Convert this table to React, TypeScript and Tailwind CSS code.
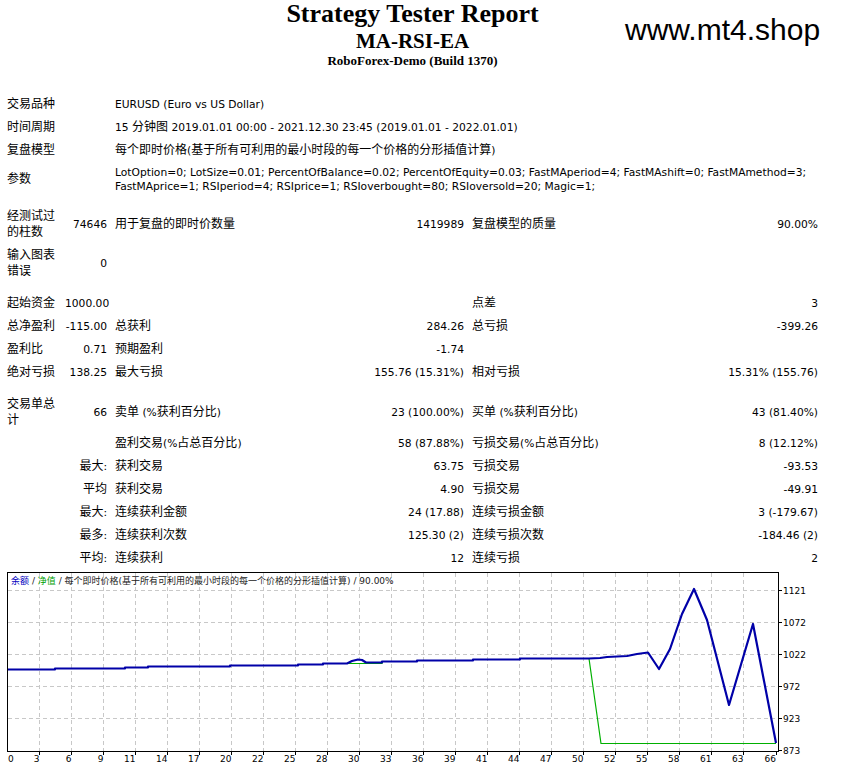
const font = "font-['DejaVu_Sans','Noto_Sans_CJK_SC',sans-serif]"

// CJK runs get a slightly larger size than the latin text, like the Tahoma/YaHei mix of the report
function T({ s }: { s: string }) {
  const parts = s.split(/([\u3000-\u9fff\uff00-\uffef]+)/)
  return (
    <>
      {parts.map((p, i) =>
        /[\u3000-\u9fff\uff00-\uffef]/.test(p) ? (
          <span key={i} className="text-[12px] leading-[0px]">
            {p}
          </span>
        ) : (
          p
        )
      )}
    </>
  )
}

type Row =
  | { kind: "spacer"; h: string }
  | { kind: "wide"; label: string; value: React.ReactNode; tight?: boolean }
  | { kind: "cells"; cells: (string | null)[]; lead?: string }

const rows: Row[] = [
  { kind: "wide", label: "交易品种", value: "EURUSD (Euro vs US Dollar)" },
  { kind: "wide", label: "时间周期", value: <T s="15 分钟图 2019.01.01 00:00 - 2021.12.30 23:45 (2019.01.01 - 2022.01.01)" /> },
  { kind: "wide", label: "复盘模型", value: <T s="每个即时价格(基于所有可利用的最小时段的每一个价格的分形插值计算)" /> },
  {
    kind: "wide",
    label: "参数",
    tight: true,
    value: (
      <>
        <span className="whitespace-nowrap">
          LotOption=0; LotSize=0.01; PercentOfBalance=0.02; PercentOfEquity=0.03; FastMAperiod=4; FastMAshift=0; FastMAmethod=3;
        </span>
        <br />
        <span className="whitespace-nowrap">
          FastMAprice=1; RSIperiod=4; RSIprice=1; RSIoverbought=80; RSIoversold=20; Magic=1;
        </span>
      </>
    ),
  },
  { kind: "spacer", h: "h-[8px]" },
  { kind: "cells", cells: ["经测试过的柱数", "74646", "用于复盘的即时价数量", "1419989", "复盘模型的质量", "90.00%"] },
  { kind: "cells", cells: ["输入图表错误", "0", null, null, null, null] },
  { kind: "spacer", h: "h-[9px]" },
  { kind: "cells", cells: ["起始资金", "1000.00", null, null, "点差", "3"] },
  { kind: "cells", cells: ["总净盈利", "-115.00", "总获利", "284.26", "总亏损", "-399.26"] },
  { kind: "cells", cells: ["盈利比", "0.71", "预期盈利", "-1.74", null, null] },
  { kind: "cells", cells: ["绝对亏损", "138.25", "最大亏损", "155.76 (15.31%)", "相对亏损", "15.31% (155.76)"] },
  { kind: "spacer", h: "h-[9px]" },
  { kind: "cells", cells: ["交易单总计", "66", "卖单 (%获利百分比)", "23 (100.00%)", "买单 (%获利百分比)", "43 (81.40%)"] },
  { kind: "cells", lead: "", cells: ["盈利交易(%占总百分比)", "58 (87.88%)", "亏损交易(%占总百分比)", "8 (12.12%)"] },
  { kind: "cells", lead: "最大:", cells: ["获利交易", "63.75", "亏损交易", "-93.53"] },
  { kind: "cells", lead: "平均", cells: ["获利交易", "4.90", "亏损交易", "-49.91"] },
  { kind: "cells", lead: "最大:", cells: ["连续获利金额", "24 (17.88)", "连续亏损金额", "3 (-179.67)"] },
  { kind: "cells", lead: "最多:", cells: ["连续获利次数", "125.30 (2)", "连续亏损次数", "-184.46 (2)"] },
  { kind: "cells", lead: "平均:", cells: ["连续获利", "12", "连续亏损", "2"] },
]

const cell = "px-[4px] py-[3.5px] align-middle"

function ReportTable() {
  return (
    <table className="ml-[3px] w-[819px] table-fixed border-collapse text-[10.7px] leading-[16px] text-black">
      <colgroup>
        <col className="w-[58px]" />
        <col className="w-[50px]" />
        <col className="w-[189px]" />
        <col className="w-[168px]" />
        <col className="w-[182px]" />
        <col className="w-[172px]" />
      </colgroup>
      <tbody>
        {rows.map((row, i) => {
          if (row.kind === "spacer") {
            return (
              <tr key={i} className={row.h}>
                <td colSpan={6} className="p-0" />
              </tr>
            )
          }
          if (row.kind === "wide") {
            return (
              <tr key={i}>
                <td colSpan={2} className={cell}>
                  <T s={row.label} />
                </td>
                <td colSpan={4} className={`${cell} ${row.tight ? "leading-[14px]" : ""}`}>
                  {row.value}
                </td>
              </tr>
            )
          }
          if (row.lead !== undefined) {
            const [a, b, c, d] = row.cells
            return (
              <tr key={i}>
                <td colSpan={2} className={`${cell} text-right`}>
                  <T s={row.lead} />
                </td>
                <td className={cell}>{a && <T s={a} />}</td>
                <td className={`${cell} text-right`}>{b}</td>
                <td className={cell}>{c && <T s={c} />}</td>
                <td className={`${cell} text-right`}>{d}</td>
              </tr>
            )
          }
          return (
            <tr key={i}>
              {row.cells.map((c, j) => (
                <td key={j} className={`${cell} ${j % 2 === 1 ? "text-right" : ""}`}>
                  {c && <T s={c} />}
                </td>
              ))}
            </tr>
          )
        })}
      </tbody>
    </table>
  )
}

const blue = [
  [8, 669.5], [55, 669.5], [55, 668.5], [125, 668.5], [125, 667.5], [148, 667.5], [148, 666.5],
  [230, 666.5], [230, 665.5], [298, 665.5], [298, 664.5], [323, 664.5], [323, 663.5], [347, 663.5],
  [352, 661], [358, 659.5], [362, 660], [366, 662.5], [382, 662.5], [382, 661.5], [417, 661.5],
  [417, 660.5], [473, 660.5], [473, 659.5], [520, 659.5], [520, 658.5], [589, 658.5], [600, 658],
  [607, 657], [627, 656], [637, 654], [648, 652.5], [659, 669], [670, 649], [682, 614], [694, 589],
  [707, 620], [729, 705], [753, 624], [776, 743],
]

const green = [
  [8, 669.5], [55, 669.5], [55, 668.5], [125, 668.5], [125, 667.5], [148, 667.5], [148, 666.5],
  [230, 666.5], [230, 665.5], [298, 665.5], [298, 664.5], [323, 664.5], [323, 663.5], [382, 663.5],
  [382, 661.5], [417, 661.5], [417, 660.5], [473, 660.5], [473, 659.5], [520, 659.5], [520, 658.5],
  [589, 658.5], [601, 743.5], [776, 743.5],
]

const xLabels = ["3", "6", "9", "11", "14", "17", "20", "22", "25", "28", "30", "33", "36", "39", "41", "44", "47", "50", "52", "55", "58", "61", "63"]
const yLabels = ["1121", "1072", "1022", "972", "923", "873"]
const svgFont = "'DejaVu Sans','Noto Sans CJK SC',sans-serif"

function EquityChart() {
  const pts = (p: number[][]) => p.map(([x, y]) => `${x},${y}`).join(" ")
  return (
    <svg width={842} height={195} viewBox="0 571 842 195" className="block">
      <rect x={7.5} y={572.5} width={771} height={179} fill="#fff" stroke="#000" />
      {[590.5, 622.5, 654.5, 686.5, 718.5].map((y) => (
        <line key={y} x1={8} x2={778} y1={y} y2={y} stroke="#c8c8c8" strokeDasharray="4 3" />
      ))}
      {xLabels.map((_, k) => {
        const x = 39.5 + 32 * k
        return <line key={k} x1={x} x2={x} y1={573} y2={751} stroke="#c8c8c8" strokeDasharray="4 3" />
      })}
      <text x={11} y={584} fontSize={9} fontFamily={svgFont} fill="#222">
        <tspan fill="#0000c0">余额</tspan>
        <tspan> / </tspan>
        <tspan fill="#00a000">净值</tspan>
        <tspan> / 每个即时价格(基于所有可利用的最小时段的每一个价格的分形插值计算) / 90.00%</tspan>
      </text>
      <polyline points={pts(green)} fill="none" stroke="#00b000" strokeWidth={1.2} />
      <polyline points={pts(blue)} fill="none" stroke="#0000a8" strokeWidth={2.2} strokeLinejoin="round" />
      {yLabels.map((l, i) => {
        const y = 590.5 + 32 * i
        return (
          <g key={l}>
            <line x1={778} x2={782} y1={y} y2={y} stroke="#000" />
            <text x={783} y={y + 3.5} fontSize={9} fontFamily={svgFont} fill="#000">
              {l}
            </text>
          </g>
        )
      })}
      {xLabels.map((l, k) => {
        const x = 39.5 + 32 * k
        return (
          <g key={l}>
            <line x1={x} x2={x} y1={751} y2={755} stroke="#000" />
            <text x={x} y={762} fontSize={9} fontFamily={svgFont} textAnchor="end" fill="#000">
              {l}
            </text>
          </g>
        )
      })}
      <text x={8} y={762} fontSize={9} fontFamily={svgFont} fill="#000">
        0
      </text>
      <line x1={776.5} x2={776.5} y1={751} y2={755} stroke="#000" />
      <text x={776} y={762} fontSize={9} fontFamily={svgFont} textAnchor="end" fill="#000">
        66
      </text>
    </svg>
  )
}

export default function App() {
  return (
    <div className={`relative h-[766px] w-[842px] overflow-hidden bg-white ${font}`}>
      <div className="ml-[3px] flex h-[93.5px] w-[819px] flex-col items-center font-['Liberation_Serif',serif] font-bold text-black">
        <div className="text-[26px] leading-[28px]">Strategy Tester Report</div>
        <div className="mt-[1px] text-[21px] leading-[24px]">MA-RSI-EA</div>
        <div className="text-[13px] leading-[16px]">RoboForex-Demo (Build 1370)</div>
      </div>
      <div className="absolute left-[625px] top-[15px] font-['Liberation_Sans',sans-serif] text-[30px] leading-[30px] text-black">
        www.mt4.shop
      </div>
      <ReportTable />
      <EquityChart />
    </div>
  )
}
